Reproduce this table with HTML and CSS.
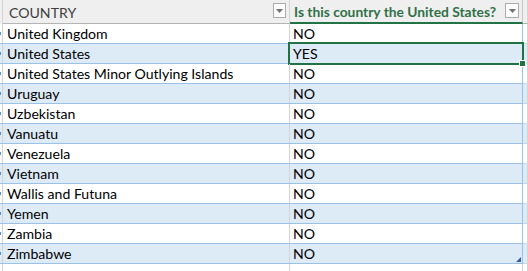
FILE: index.html
```html
<!DOCTYPE html>
<html>
<head>
<meta charset="utf-8">
<link rel="stylesheet" href="styles.css">
</head>
<body>
<div class="sheet">
  <div class="row head">
    <div class="stub"></div>
    <div class="cell a">COUNTRY<span class="dd"><svg width="7" height="4" viewBox="0 0 7 4"><path d="M0 0h7L3.5 4z" fill="#707070"/></svg></span></div>
    <div class="cell b">Is this country the United States?<span class="dd"><svg width="7" height="4" viewBox="0 0 7 4"><path d="M0 0h7L3.5 4z" fill="#707070"/></svg></span></div>
    <div class="tail"></div>
  </div>
  <div class="row"><div class="stub"></div><div class="cell a">United Kingdom</div><div class="cell b">NO</div><div class="tail"></div></div>
  <div class="row alt"><div class="stub"></div><div class="cell a">United States</div><div class="cell b sel">YES<span class="handle"></span></div><div class="tail"></div></div>
  <div class="row"><div class="stub"></div><div class="cell a">United States Minor Outlying Islands</div><div class="cell b">NO</div><div class="tail"></div></div>
  <div class="row alt"><div class="stub"></div><div class="cell a">Uruguay</div><div class="cell b">NO</div><div class="tail"></div></div>
  <div class="row"><div class="stub"></div><div class="cell a">Uzbekistan</div><div class="cell b">NO</div><div class="tail"></div></div>
  <div class="row alt"><div class="stub"></div><div class="cell a">Vanuatu</div><div class="cell b">NO</div><div class="tail"></div></div>
  <div class="row"><div class="stub"></div><div class="cell a">Venezuela</div><div class="cell b">NO</div><div class="tail"></div></div>
  <div class="row alt"><div class="stub"></div><div class="cell a">Vietnam</div><div class="cell b">NO</div><div class="tail"></div></div>
  <div class="row"><div class="stub"></div><div class="cell a">Wallis and Futuna</div><div class="cell b">NO</div><div class="tail"></div></div>
  <div class="row alt"><div class="stub"></div><div class="cell a">Yemen</div><div class="cell b">NO</div><div class="tail"></div></div>
  <div class="row"><div class="stub"></div><div class="cell a">Zambia</div><div class="cell b">NO</div><div class="tail"></div></div>
  <div class="row alt last"><div class="stub"></div><div class="cell a">Zimbabwe</div><div class="cell b">NO<span class="resize"></span></div><div class="tail"></div></div>
  <div class="row empty"><div class="stub"></div><div class="cell a"></div><div class="cell b"></div><div class="tail"></div></div>
</div>
</body>
</html>
```
FILE: styles.css
```css
html, body { margin: 0; padding: 0; background: #fff; }
body { font-family: Lato, "Liberation Sans", sans-serif; font-size: 14.1px; color: #000; }
.sheet { width: 528px; height: 271px; overflow: hidden; }
.row { display: flex; height: 20px; box-sizing: border-box; border-bottom: 1px solid #9bc2e6; }
.row.alt { background: #ddebf7; }
.row.empty { border-bottom: none; background: #fff; }
.row.head { height: 24px; background: #efefef; border-bottom: none; }
.stub { width: 2px; flex: none; border-right: 1px solid #d4d4d4; position: relative; }
.row:not(.head):not(.empty) .stub::after { content: ""; position: absolute; left: 0; top: 8px; width: 1px; height: 3px; background: #5b8fc7; }
.cell { flex: none; box-sizing: border-box; display: flex; align-items: center; position: relative; padding-left: 4px; white-space: nowrap; overflow: visible; line-height: 19px; }
.cell.a { width: 287px; border-right: 1px solid #d4d4d4; }
.cell.b { width: 233px; border-right: 1px solid #9bc2e6; padding-left: 3px; }
.row.empty .cell.b { border-right: 1px solid #d4d4d4; }
.tail { flex: 1; border-right: 1px solid #d4d4d4; margin-bottom: -1px; border-bottom: 1px solid #d4d4d4; }
.row.empty .tail { border-bottom: none; }
.head .cell { border-bottom: 1px solid #b4b4b4; height: 24px; line-height: 23px; }
.head .cell.a { color: #404040; padding-left: 6px; padding-top: 1px; }
.head .cell.b { color: #2f7147; font-weight: 700; font-size: 13.8px; border-bottom: 2px solid #217346; border-right: 1px solid #c8c8c8; padding-left: 4px; }
.head .tail { border-bottom: 1px solid #b4b4b4; margin-bottom: 0; }
.dd { position: absolute; right: 3px; top: 3px; width: 14px; height: 15px; box-sizing: border-box; background: #fdfdfd; border: 1px solid #ababab; display: flex; align-items: center; justify-content: center; }
.head .cell.a .dd { right: 3px; width: 13px; }
.sel::before { content: ""; position: absolute; left: -2px; top: -2px; right: -2px; bottom: -2px; border: 2px solid #217346; }
.handle { position: absolute; right: -4px; bottom: -4px; width: 5px; height: 5px; background: #217346; border: 1px solid #fff; z-index: 2; }
.resize { position: absolute; right: 1px; bottom: 1px; width: 0; height: 0; border-left: 5px solid transparent; border-bottom: 5px solid #3a5ca8; }
```
